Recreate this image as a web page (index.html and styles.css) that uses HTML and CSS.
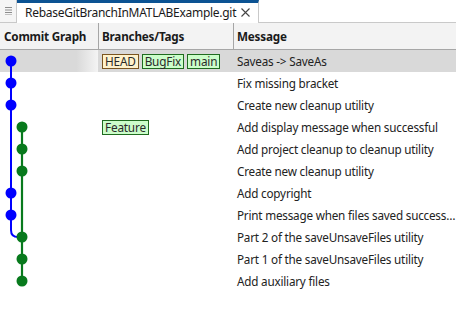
FILE: index.html
```html
<!DOCTYPE html>
<html>
<head>
<meta charset="utf-8">
<link rel="stylesheet" href="styles.css">
</head>
<body>
<div class="tabbar">
  <div class="grip">
    <svg width="7" height="8" viewBox="0 0 7 8"><path d="M0 0.5H7M0 3H7M0 5.5H7M0 8H7" stroke="#8c8c8c" stroke-width="1"/></svg>
  </div>
  <div class="tab">
    <span class="tab-title">RebaseGitBranchInMATLABExample.git</span>
    <svg class="close" width="9" height="9" viewBox="0 0 9 9"><path d="M0.5 0.5L8.5 8.5M8.5 0.5L0.5 8.5" stroke="#444" stroke-width="1.1"/></svg>
  </div>
  <div class="tabfill"></div>
</div>
<div class="header">
  <div class="hcell">Commit Graph</div>
  <div class="hcell">Branches/Tags</div>
  <div class="hcell">Message</div>
</div>
<div class="body">
  <svg class="graph" width="98" height="242" viewBox="0 0 98 242">
    <path d="M11 11V180Q11 187 18 187H22" fill="none" stroke="#0000ff" stroke-width="2"/>
    <path d="M22 77V231" fill="none" stroke="#087a1d" stroke-width="2.2"/>
    <g fill="#0000ff">
      <circle cx="11" cy="11" r="5.5"/>
      <circle cx="11" cy="33" r="5.5"/>
      <circle cx="11" cy="55" r="5.5"/>
      <circle cx="11" cy="143" r="5.5"/>
      <circle cx="11" cy="165" r="5.5"/>
    </g>
    <g fill="#087a1d">
      <circle cx="22" cy="77" r="5.5"/>
      <circle cx="22" cy="99" r="5.5"/>
      <circle cx="22" cy="121" r="5.5"/>
      <circle cx="22" cy="187" r="5.5"/>
      <circle cx="22" cy="209" r="5.5"/>
      <circle cx="22" cy="231" r="5.5"/>
    </g>
  </svg>
  <div class="row selected">
    <div class="gcell"></div>
    <div class="tags"><span class="tag head">HEAD</span><span class="tag branch">BugFix</span><span class="tag branch">main</span></div>
    <div class="msg">Saveas -&gt; SaveAs</div>
  </div>
  <div class="row"><div class="gcell"></div><div class="tags"></div><div class="msg">Fix missing bracket</div></div>
  <div class="row"><div class="gcell"></div><div class="tags"></div><div class="msg">Create new cleanup utility</div></div>
  <div class="row"><div class="gcell"></div><div class="tags"><span class="tag branch">Feature</span></div><div class="msg">Add display message when successful</div></div>
  <div class="row"><div class="gcell"></div><div class="tags"></div><div class="msg">Add project cleanup to cleanup utility</div></div>
  <div class="row"><div class="gcell"></div><div class="tags"></div><div class="msg">Create new cleanup utility</div></div>
  <div class="row"><div class="gcell"></div><div class="tags"></div><div class="msg">Add copyright</div></div>
  <div class="row"><div class="gcell"></div><div class="tags"></div><div class="msg">Print message when files saved successfully</div></div>
  <div class="row"><div class="gcell"></div><div class="tags"></div><div class="msg">Part 2 of the saveUnsaveFiles utility</div></div>
  <div class="row"><div class="gcell"></div><div class="tags"></div><div class="msg">Part 1 of the saveUnsaveFiles utility</div></div>
  <div class="row"><div class="gcell"></div><div class="tags"></div><div class="msg">Add auxiliary files</div></div>
</div>
</body>
</html>
```
FILE: styles.css
```css
* { box-sizing: border-box; }
html, body { margin: 0; padding: 0; background: #fff; }
body {
  width: 456px;
  height: 319px;
  overflow: hidden;
  font-family: "Noto Sans", "Open Sans", sans-serif;
  font-size: 11.7px;
  letter-spacing: -0.2px;
  color: #222;
}
.tabbar {
  display: flex;
  height: 23px;
}
.grip {
  width: 17px;
  background: #f5f5f5;
  border-right: 1px solid #c9c9c9;
  border-bottom: 1px solid #c9c9c9;
  display: flex;
  justify-content: center;
  padding-top: 7px;
}
.grip svg { display: block; }
.tab {
  width: 242px;
  background: #fff;
  border-top: 3px solid #0c5393;
  border-right: 1px solid #c9c9c9;
  display: flex;
  align-items: center;
  padding-left: 8px;
  padding-bottom: 1px;
  gap: 5px;
}
.tab-title {
  font-size: 12px;
  color: #1a1a1a;
  white-space: nowrap;
  letter-spacing: -0.28px;
}
.close { display: block; flex: none; }
.tabfill {
  flex: 1;
  background: #fff;
  border-bottom: 1px solid #c9c9c9;
}
.header {
  display: grid;
  grid-template-columns: 98px 135px 1fr;
  height: 27px;
  background: #f3f3f3;
  border-bottom: 1px solid #a6a6a6;
}
.hcell {
  font-weight: bold;
  color: #1a1a1a;
  padding-left: 4px;
  display: flex;
  align-items: center;
  white-space: nowrap;
}
.hcell + .hcell { border-left: 1px solid #a6a6a6; padding-left: 3px; }
.body {
  position: relative;
}
.graph {
  position: absolute;
  left: 0;
  top: 0;
  z-index: 1;
}
.row {
  display: grid;
  grid-template-columns: 98px 135px 1fr;
  height: 22px;
  align-items: center;
}
.row.selected { background: #d9d9d9; }
.row.selected .gcell {
  height: 22px;
  background: linear-gradient(to right, #d9d9d9 78%, #f4f4f4 100%);
}
.tags {
  display: flex;
  gap: 3px;
  padding-left: 4px;
}
.tag {
  height: 15px;
  line-height: 12px;
  padding: 0 2px;
  border: 1px solid #1f6b1f;
  background: #ccfdca;
  color: #2a2a2a;
  font-size: 11.8px;
  letter-spacing: -0.2px;
}
.tag.head {
  background: #fff2cc;
  border-color: #7a5520;
}
.msg {
  padding-left: 4px;
  white-space: nowrap;
  overflow: hidden;
  text-overflow: ellipsis;
}
```
